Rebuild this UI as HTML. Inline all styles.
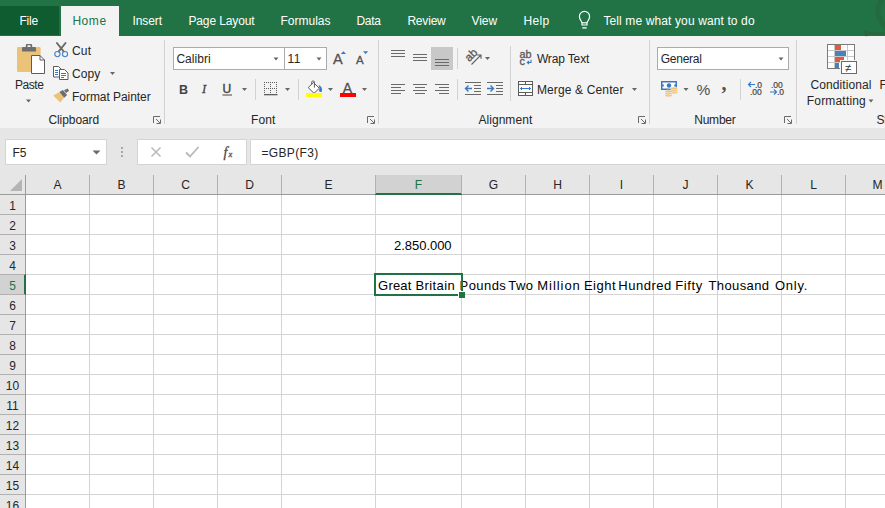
<!DOCTYPE html>
<html>
<head>
<meta charset="utf-8">
<title>Excel</title>
<style>
*{box-sizing:border-box;margin:0;padding:0}
html,body{width:885px;height:508px;overflow:hidden;background:#fff}
body{font-family:"Liberation Sans",sans-serif;font-size:12px;color:#262626;position:relative}
.abs{position:absolute}
#tabs{left:0;top:0;width:885px;height:36px;background:#217346}
#file{left:0;top:6px;width:59px;height:29px;background:#0e5c2f}
#home{left:61px;top:6px;width:58px;height:31px;background:#f3f3f3}
#ribbon{left:0;top:36px;width:885px;height:92px;background:#f3f3f3}
#below{left:0;top:128px;width:885px;height:380px;background:#e6e6e6}
.t{position:absolute;white-space:pre;line-height:15px;font-size:12px;color:#262626}
.sep{position:absolute;width:1px;background:#d2d2d2}
.box{position:absolute;background:#fff;border:1px solid #ababab}
.fbox{position:absolute;background:#fff;border:1px solid #d4d4d4}
.arr{position:absolute;width:0;height:0;border-left:3px solid transparent;border-right:3px solid transparent;border-top:3px solid #606060}
.ch{position:absolute;top:177px;font-size:13px;line-height:15px;text-align:center;transform:scaleX(.93)}
.rh{position:absolute;left:0;width:25px;font-size:13px;line-height:15px;text-align:center;transform:scaleX(.92)}
svg{position:absolute;overflow:visible}
</style>
</head>
<body>
<div id="tabs" class="abs"></div>
<div id="file" class="abs"></div>
<div id="home" class="abs"></div>
<div id="ribbon" class="abs"></div>
<div id="below" class="abs"></div>
<div class="fbox" style="left:5px;top:139px;width:102px;height:26px"></div>
<div class="fbox" style="left:137px;top:139px;width:110px;height:26px"></div>
<div class="fbox" style="left:250px;top:139px;width:640px;height:26px"></div>
<svg width="885" height="175" viewBox="0 0 885 175" style="left:0;top:0" font-family="'Liberation Sans',sans-serif">
<!-- decorative header pattern -->
<g fill="none" stroke="#25693f" stroke-width="3">
<circle cx="897" cy="11" r="19" stroke-width="5"/>
<path d="M866 33.500H885"/>
</g>
<circle cx="866.500" cy="33.500" r="2.800" fill="#25693f"/>
<!-- lightbulb -->
<g fill="none" stroke="#fff" stroke-width="1.2">
<path d="M582 25v-1.8c0-1.8-2.6-3.6-2.6-6.7a5.1 5.1 0 0 1 10.2 0c0 3.100-2.600 4.900-2.600 6.700V25Z"/>
<path d="M582 22.800h5"/>
<path d="M582.300 27.900h4.400" stroke-width="1.300"/>
</g>
<!-- group separators -->
<g fill="#d2d2d2" shape-rendering="crispEdges">
<rect x="164" y="40" width="1" height="84"/>
<rect x="378" y="40" width="1" height="84"/>
<rect x="649" y="40" width="1" height="84"/>
<rect x="796" y="40" width="1" height="84"/>
<rect x="255" y="79" width="1" height="21"/>
<rect x="298" y="79" width="1" height="21"/>
<rect x="457" y="48" width="1" height="21"/>
<rect x="457" y="79" width="1" height="21"/>
<rect x="510" y="46" width="1" height="55"/>
<rect x="740" y="79" width="1" height="21"/>
</g>
<!-- dialog launchers -->
<g fill="none" stroke="#6a6a6a" stroke-width="1"><path d="M153.500 123v-6.500H160"/><path d="M156 119l4 4M160.500 119.500v4h-4"/></g>
<g fill="none" stroke="#6a6a6a" stroke-width="1" transform="translate(214 0)"><path d="M153.500 123v-6.500H160"/><path d="M156 119l4 4M160.500 119.500v4h-4"/></g>
<g fill="none" stroke="#6a6a6a" stroke-width="1" transform="translate(485 0)"><path d="M153.500 123v-6.500H160"/><path d="M156 119l4 4M160.500 119.500v4h-4"/></g>
<g fill="none" stroke="#6a6a6a" stroke-width="1" transform="translate(631 0)"><path d="M153.500 123v-6.500H160"/><path d="M156 119l4 4M160.500 119.500v4h-4"/></g>
<!-- PASTE -->
<rect x="17" y="47" width="23.600" height="25" rx="1.200" fill="#ebc378"/>
<path d="M22 51.500v-3.300q0-1.200 1.200-1.200h2.600v-1.800q0-1.200 1.200-1.200h4q1.200 0 1.200 1.200v1.800h2.600q1.200 0 1.200 1.200v3.300z" fill="#6e6e6e"/>
<rect x="27.500" y="45.300" width="3" height="1.700" fill="#f3f3f3"/>
<path d="M31.500 55.500h8.500l4.500 4.500v13.500h-13z" fill="#fff" stroke="#5c5c5c" stroke-width="1"/>
<path d="M40 55.500v4.500h4.500" fill="none" stroke="#5c5c5c" stroke-width="1"/>
<!-- CUT -->
<g fill="none" stroke-linecap="round">
<path d="M56.900 43l6.700 8.400M65.500 43l-6.700 8.400" stroke="#6a6a6a" stroke-width="1.900"/>
<circle cx="57.400" cy="54.100" r="2.600" stroke="#4482c8" stroke-width="1.100"/>
<circle cx="65" cy="54.100" r="2.600" stroke="#4482c8" stroke-width="1.100"/>
</g>
<!-- COPY -->
<g stroke="#5c5c5c" stroke-width="1" fill="#fff">
<path d="M53.500 66.500h5l3 3v7.500h-8z"/>
<path d="M59.500 69.500h5l3.500 3.500v6.500h-8.500z"/>
</g>
<g stroke="#3b78c3" stroke-width="1" shape-rendering="crispEdges">
<path d="M55 70.500h3M55 72.500h3M55 74.500h3M61 73.500h5M61 75.500h5M61 77.500h3"/>
</g>
<!-- FORMAT PAINTER -->
<path d="M53.300 95.600l5.700-3.400 5.200 5.500-4 4.700z" fill="#ebc378"/>
<path d="M59.300 92l3.600-1.900 4.200 5-2.900 2.600z" fill="#6e6e6e"/>
<path d="M64 90.200l3.600-1.700 1.500 2.200-3 2.300z" fill="#6e6e6e"/>
<!-- FONT boxes -->
<g fill="#fff" stroke="#ababab" stroke-width="1">
<rect x="173.500" y="47.500" width="111" height="22"/>
<rect x="284.500" y="47.500" width="42" height="22"/>
<rect x="657.500" y="47.500" width="131" height="22"/>
</g>
<!-- grow / shrink font -->
<text x="333" y="64" font-size="14.500" fill="#505050" stroke="#505050" stroke-width=".3">A</text>
<path d="M340.800 54l2.600-2.800 2.600 2.800z" fill="#3b78c3"/>
<text x="356" y="64" font-size="11.500" fill="#505050" stroke="#505050" stroke-width=".3">A</text>
<path d="M363 51.300h5.200l-2.600 2.700z" fill="#3b78c3"/>
<!-- B I U -->
<text x="179" y="93.500" font-size="12.500" font-weight="bold" fill="#444">B</text>
<text x="202" y="93" font-size="12.500" font-style="italic" font-family="'Liberation Serif',serif" fill="#444" stroke="#444" stroke-width=".3">I</text>
<text x="222.500" y="93" font-size="12" fill="#444" stroke="#444" stroke-width=".4">U</text>
<rect x="222.500" y="94.500" width="9.500" height="1" fill="#444"/>
<!-- borders icon -->
<g fill="none" stroke="#5c5c5c" stroke-width="1" stroke-dasharray="1 1" shape-rendering="crispEdges">
<path d="M264 82.500h14M264 88.500h14M264.500 82v12M270.500 82v12M276.500 82v12"/>
</g>
<rect x="264" y="94" width="13.500" height="1.300" fill="#5c5c5c"/>
<!-- fill bucket -->
<path d="M313.500 82.500l5.800 5.800-5.300 5-5.800-5.700z" fill="#fff" stroke="#5c5c5c" stroke-width="1"/>
<path d="M311.700 84.300v-2.200q0-1 1-1h.7q1 0 1 1v5.500" fill="none" stroke="#5c5c5c" stroke-width="1"/>
<path d="M318.600 84.800q4.200 2 3.300 7-1.800.5-2.900-.6 1.300-3-.4-6.400z" fill="#3b78c3"/>
<rect x="306" y="93" width="16" height="4" fill="#ffff00"/>
<!-- font color -->
<text x="342.700" y="93" font-size="14" fill="#505050" stroke="#505050" stroke-width=".3">A</text>
<rect x="340" y="93" width="16" height="4" fill="#ff0000"/>
<!-- alignment -->
<rect x="431" y="47" width="22" height="23" fill="#c8c8c8"/>
<g fill="#6a6a6a" shape-rendering="crispEdges">
<rect x="391" y="50" width="14" height="1"/><rect x="391" y="53" width="14" height="1"/><rect x="391" y="56" width="14" height="1"/>
<rect x="413" y="54" width="14" height="1"/><rect x="413" y="57" width="14" height="1"/><rect x="413" y="60" width="14" height="1"/>
<rect x="435" y="59" width="14" height="1"/><rect x="435" y="62" width="14" height="1"/><rect x="435" y="65" width="14" height="1"/>
<rect x="391" y="84" width="14" height="1"/><rect x="391" y="87" width="10" height="1"/><rect x="391" y="90" width="14" height="1"/><rect x="391" y="93" width="10" height="1"/>
<rect x="413" y="84" width="14" height="1"/><rect x="415" y="87" width="10" height="1"/><rect x="413" y="90" width="14" height="1"/><rect x="415" y="93" width="10" height="1"/>
<rect x="435" y="84" width="14" height="1"/><rect x="439" y="87" width="10" height="1"/><rect x="435" y="90" width="14" height="1"/><rect x="439" y="93" width="10" height="1"/>
<!-- indent -->
<rect x="465" y="82" width="16" height="1"/><rect x="474" y="85" width="7" height="1"/><rect x="474" y="88" width="7" height="1"/><rect x="474" y="91" width="7" height="1"/><rect x="465" y="94" width="16" height="1"/>
<rect x="487" y="82" width="16" height="1"/><rect x="496" y="85" width="7" height="1"/><rect x="496" y="88" width="7" height="1"/><rect x="496" y="91" width="7" height="1"/><rect x="487" y="94" width="16" height="1"/>
</g>
<g fill="none" stroke="#3b78c3" stroke-width="1.400">
<path d="M472 88.500h-6M468.500 85.500l-3 3 3 3"/>
<path d="M487 88.500h6M490.500 85.500l3 3-3 3"/>
</g>
<!-- orientation -->
<text transform="translate(469.300 62.300) rotate(-45)" font-size="11.500" fill="#5c5c5c" stroke="#5c5c5c" stroke-width=".35">ab</text>
<g fill="none" stroke="#5c5c5c" stroke-width="1.100"><path d="M471.500 64.500l9.300-9.300M477.300 55h3.700v3.700"/></g>
<!-- wrap text icon -->
<text x="519.500" y="57.700" font-size="10.800" fill="#5c5c5c" stroke="#5c5c5c" stroke-width=".35">ab</text>
<text x="519.500" y="65" font-size="10.800" fill="#5c5c5c" stroke="#5c5c5c" stroke-width=".35">c</text>
<g fill="none" stroke="#3b78c3" stroke-width="1.100"><path d="M531 59.800v2.700h-3.500M529 61l-1.700 1.500 1.700 1.500"/></g>
<!-- merge icon -->
<g fill="#fff" stroke="#5c5c5c" stroke-width="1" shape-rendering="crispEdges">
<rect x="518.500" y="81.500" width="14" height="14"/>
<path d="M518.500 84.500h14M518.500 92.500h14M525.500 81.500v3M525.500 92.500v3"/>
</g>
<g fill="none" stroke="#3b78c3" stroke-width="1"><path d="M520.500 88.500h10M522 87l-1.500 1.500 1.500 1.500M529 87l1.500 1.500-1.500 1.500"/></g>
<!-- currency -->
<rect x="661" y="81" width="16" height="9" fill="#3b78c3"/>
<rect x="662.500" y="82.500" width="13" height="6" fill="#fff"/>
<circle cx="669" cy="85.500" r="2.200" fill="#3b78c3"/>
<rect x="661.800" y="84.500" width="2" height="2" fill="#3b78c3"/><rect x="674.200" y="84.500" width="2" height="2" fill="#3b78c3"/>
<g fill="#ebc378" stroke="#f3f3f3" stroke-width=".6">
<ellipse cx="674" cy="92.500" rx="3.500" ry="1.400"/><ellipse cx="674" cy="90.500" rx="3.500" ry="1.400"/><ellipse cx="674" cy="88.500" rx="3.500" ry="1.400"/>
<ellipse cx="668.500" cy="95.500" rx="3.500" ry="1.400"/><ellipse cx="668.500" cy="93.500" rx="3.500" ry="1.400"/><ellipse cx="668.500" cy="91.500" rx="3.500" ry="1.400"/>
</g>
<text x="696.500" y="95" font-size="15.500" fill="#505050">%</text>
<text x="721.500" y="90" font-size="20" font-weight="bold" font-family="'Liberation Serif',serif" fill="#505050">,</text>
<!-- inc/dec decimal -->
<g font-size="8.500" fill="#444" stroke="#444" stroke-width=".2">
<text x="755" y="87.500">.0</text><text x="750" y="95">.00</text>
<text x="771" y="87.500">.00</text><text x="777" y="95">.0</text>
</g>
<g fill="none" stroke="#3b78c3" stroke-width="1.200">
<path d="M755 84.500h-6.500M751 82l-2.500 2.500 2.500 2.500"/>
<path d="M770 92h6.500M774 89.500l2.500 2.500-2.500 2.500"/>
</g>
<!-- conditional formatting -->
<rect x="827.500" y="44.500" width="27" height="24" fill="#fff" stroke="#7a7a7a" stroke-width="1"/>
<g stroke="#c8c8c8" stroke-width="1" shape-rendering="crispEdges"><path d="M834.500 45v23M847.500 45v23M828 50.500h26M828 56.500h26M828 62.500h26"/></g>
<rect x="835" y="45" width="6" height="5" fill="#dc5c3c"/>
<rect x="835" y="51" width="11" height="5" fill="#4a80bc"/>
<rect x="835" y="57" width="9" height="5" fill="#dc5c3c"/>
<rect x="835" y="63" width="4" height="5" fill="#4a80bc"/>
<rect x="840" y="60" width="18" height="14" fill="#f3f3f3"/>
<rect x="841.500" y="61.500" width="15" height="12" fill="#fff" stroke="#6a6a6a" stroke-width="1"/>
<text x="845" y="72" font-size="11.500" fill="#333">≠</text>
<!-- dropdown arrows -->
<g fill="#666">
<path transform="translate(26 99.500)" d="M0 0h5l-2.500 3z"/>
<path transform="translate(110 72)" d="M0 0h5l-2.500 3z"/>
<path transform="translate(273.500 57.500)" d="M0 0h5l-2.500 3z"/>
<path transform="translate(316.500 57.500)" d="M0 0h5l-2.500 3z"/>
<path transform="translate(242 88)" d="M0 0h5l-2.500 3z"/>
<path transform="translate(285 88)" d="M0 0h5l-2.500 3z"/>
<path transform="translate(328 88)" d="M0 0h5l-2.500 3z"/>
<path transform="translate(362 88)" d="M0 0h5l-2.500 3z"/>
<path transform="translate(485 57)" d="M0 0h5l-2.500 3z"/>
<path transform="translate(632 88)" d="M0 0h5l-2.500 3z"/>
<path transform="translate(778.500 57.500)" d="M0 0h5l-2.500 3z"/>
<path transform="translate(683.500 88)" d="M0 0h5l-2.500 3z"/>
<path transform="translate(868.500 99.500)" d="M0 0h5l-2.500 3z"/>
</g>
<!-- formula bar icons -->
<g fill="#8a8a8a"><circle cx="122" cy="148" r=".9"/><circle cx="122" cy="152" r=".9"/><circle cx="122" cy="156" r=".9"/></g>
<path d="M92.500 150.500h8l-4 4z" fill="#6a6a6a"/>
<g fill="none" stroke="#b9b9b9" stroke-width="1.500">
<path d="M151.500 147.500l9 9M160.500 147.500l-9 9"/>
<path d="M186 152.500l4 4 8.500-9.500" stroke-width="1.800"/>
</g>
<text x="223.500" y="156.500" font-size="14" font-style="italic" font-family="'Liberation Serif',serif" fill="#4a4a4a" stroke="#4a4a4a" stroke-width=".3">f</text>
<text x="228.500" y="157" font-size="8.500" font-style="italic" font-family="'Liberation Serif',serif" fill="#4a4a4a" stroke="#4a4a4a" stroke-width=".3">x</text>
</svg>

<div class="abs" style="left:376px;top:175px;width:86px;height:18px;background:#d2d2d2"></div>
<div class="abs" style="left:375px;top:193px;width:87px;height:2px;background:#217346"></div>
<div class="abs" style="left:0;top:275px;width:24px;height:20px;background:#d2d2d2"></div>
<div class="abs" style="left:24px;top:274px;width:2px;height:21px;background:#217346"></div>
<div class="abs" style="left:26px;top:195px;width:859px;height:313px;background:#fff"></div>
<div class="abs" style="left:0;top:194px;width:375px;height:1px;background:#9b9b9b"></div>
<div class="abs" style="left:462px;top:194px;width:423px;height:1px;background:#9b9b9b"></div>
<div class="abs" style="left:25px;top:175px;width:1px;height:99px;background:#9b9b9b"></div>
<div class="abs" style="left:25px;top:295px;width:1px;height:213px;background:#9b9b9b"></div>
<svg class="abs" style="left:8px;top:178px" width="16" height="16"><path d="M14 1V13H2Z" fill="#b4b4b4"/></svg>
<div class="abs" style="left:89px;top:175px;width:1px;height:19px;background:#b1b1b1"></div>
<div class="abs" style="left:89px;top:195px;width:1px;height:313px;background:#d4d4d4"></div>
<div class="ch" style="left:26px;width:63px;color:#262626">A</div>
<div class="abs" style="left:153px;top:175px;width:1px;height:19px;background:#b1b1b1"></div>
<div class="abs" style="left:153px;top:195px;width:1px;height:313px;background:#d4d4d4"></div>
<div class="ch" style="left:90px;width:63px;color:#262626">B</div>
<div class="abs" style="left:217px;top:175px;width:1px;height:19px;background:#b1b1b1"></div>
<div class="abs" style="left:217px;top:195px;width:1px;height:313px;background:#d4d4d4"></div>
<div class="ch" style="left:154px;width:63px;color:#262626">C</div>
<div class="abs" style="left:281px;top:175px;width:1px;height:19px;background:#b1b1b1"></div>
<div class="abs" style="left:281px;top:195px;width:1px;height:313px;background:#d4d4d4"></div>
<div class="ch" style="left:218px;width:63px;color:#262626">D</div>
<div class="abs" style="left:375px;top:175px;width:1px;height:19px;background:#b1b1b1"></div>
<div class="abs" style="left:375px;top:195px;width:1px;height:313px;background:#d4d4d4"></div>
<div class="ch" style="left:282px;width:93px;color:#262626">E</div>
<div class="abs" style="left:461px;top:175px;width:1px;height:19px;background:#b1b1b1"></div>
<div class="abs" style="left:461px;top:195px;width:1px;height:313px;background:#d4d4d4"></div>
<div class="ch" style="left:376px;width:85px;color:#217346">F</div>
<div class="abs" style="left:525px;top:175px;width:1px;height:19px;background:#b1b1b1"></div>
<div class="abs" style="left:525px;top:195px;width:1px;height:313px;background:#d4d4d4"></div>
<div class="ch" style="left:462px;width:63px;color:#262626">G</div>
<div class="abs" style="left:589px;top:175px;width:1px;height:19px;background:#b1b1b1"></div>
<div class="abs" style="left:589px;top:195px;width:1px;height:313px;background:#d4d4d4"></div>
<div class="ch" style="left:526px;width:63px;color:#262626">H</div>
<div class="abs" style="left:653px;top:175px;width:1px;height:19px;background:#b1b1b1"></div>
<div class="abs" style="left:653px;top:195px;width:1px;height:313px;background:#d4d4d4"></div>
<div class="ch" style="left:590px;width:63px;color:#262626">I</div>
<div class="abs" style="left:717px;top:175px;width:1px;height:19px;background:#b1b1b1"></div>
<div class="abs" style="left:717px;top:195px;width:1px;height:313px;background:#d4d4d4"></div>
<div class="ch" style="left:654px;width:63px;color:#262626">J</div>
<div class="abs" style="left:781px;top:175px;width:1px;height:19px;background:#b1b1b1"></div>
<div class="abs" style="left:781px;top:195px;width:1px;height:313px;background:#d4d4d4"></div>
<div class="ch" style="left:718px;width:63px;color:#262626">K</div>
<div class="abs" style="left:845px;top:175px;width:1px;height:19px;background:#b1b1b1"></div>
<div class="abs" style="left:845px;top:195px;width:1px;height:313px;background:#d4d4d4"></div>
<div class="ch" style="left:782px;width:63px;color:#262626">L</div>
<div class="abs" style="left:909px;top:175px;width:1px;height:19px;background:#b1b1b1"></div>
<div class="abs" style="left:909px;top:195px;width:1px;height:313px;background:#d4d4d4"></div>
<div class="ch" style="left:846px;width:63px;color:#262626">M</div>
<div class="abs" style="left:0;top:214px;width:25px;height:1px;background:#b1b1b1"></div>
<div class="abs" style="left:26px;top:214px;width:859px;height:1px;background:#d4d4d4"></div>
<div class="rh" style="top:198px;color:#262626">1</div>
<div class="abs" style="left:0;top:234px;width:25px;height:1px;background:#b1b1b1"></div>
<div class="abs" style="left:26px;top:234px;width:859px;height:1px;background:#d4d4d4"></div>
<div class="rh" style="top:218px;color:#262626">2</div>
<div class="abs" style="left:0;top:254px;width:25px;height:1px;background:#b1b1b1"></div>
<div class="abs" style="left:26px;top:254px;width:859px;height:1px;background:#d4d4d4"></div>
<div class="rh" style="top:238px;color:#262626">3</div>
<div class="abs" style="left:0;top:274px;width:25px;height:1px;background:#b1b1b1"></div>
<div class="abs" style="left:26px;top:274px;width:859px;height:1px;background:#d4d4d4"></div>
<div class="rh" style="top:258px;color:#262626">4</div>
<div class="abs" style="left:0;top:294px;width:25px;height:1px;background:#b1b1b1"></div>
<div class="abs" style="left:26px;top:294px;width:859px;height:1px;background:#d4d4d4"></div>
<div class="rh" style="top:278px;color:#217346">5</div>
<div class="abs" style="left:0;top:314px;width:25px;height:1px;background:#b1b1b1"></div>
<div class="abs" style="left:26px;top:314px;width:859px;height:1px;background:#d4d4d4"></div>
<div class="rh" style="top:298px;color:#262626">6</div>
<div class="abs" style="left:0;top:334px;width:25px;height:1px;background:#b1b1b1"></div>
<div class="abs" style="left:26px;top:334px;width:859px;height:1px;background:#d4d4d4"></div>
<div class="rh" style="top:318px;color:#262626">7</div>
<div class="abs" style="left:0;top:354px;width:25px;height:1px;background:#b1b1b1"></div>
<div class="abs" style="left:26px;top:354px;width:859px;height:1px;background:#d4d4d4"></div>
<div class="rh" style="top:338px;color:#262626">8</div>
<div class="abs" style="left:0;top:374px;width:25px;height:1px;background:#b1b1b1"></div>
<div class="abs" style="left:26px;top:374px;width:859px;height:1px;background:#d4d4d4"></div>
<div class="rh" style="top:358px;color:#262626">9</div>
<div class="abs" style="left:0;top:394px;width:25px;height:1px;background:#b1b1b1"></div>
<div class="abs" style="left:26px;top:394px;width:859px;height:1px;background:#d4d4d4"></div>
<div class="rh" style="top:378px;color:#262626">10</div>
<div class="abs" style="left:0;top:414px;width:25px;height:1px;background:#b1b1b1"></div>
<div class="abs" style="left:26px;top:414px;width:859px;height:1px;background:#d4d4d4"></div>
<div class="rh" style="top:398px;color:#262626">11</div>
<div class="abs" style="left:0;top:434px;width:25px;height:1px;background:#b1b1b1"></div>
<div class="abs" style="left:26px;top:434px;width:859px;height:1px;background:#d4d4d4"></div>
<div class="rh" style="top:418px;color:#262626">12</div>
<div class="abs" style="left:0;top:454px;width:25px;height:1px;background:#b1b1b1"></div>
<div class="abs" style="left:26px;top:454px;width:859px;height:1px;background:#d4d4d4"></div>
<div class="rh" style="top:438px;color:#262626">13</div>
<div class="abs" style="left:0;top:474px;width:25px;height:1px;background:#b1b1b1"></div>
<div class="abs" style="left:26px;top:474px;width:859px;height:1px;background:#d4d4d4"></div>
<div class="rh" style="top:458px;color:#262626">14</div>
<div class="abs" style="left:0;top:494px;width:25px;height:1px;background:#b1b1b1"></div>
<div class="abs" style="left:26px;top:494px;width:859px;height:1px;background:#d4d4d4"></div>
<div class="rh" style="top:478px;color:#262626">15</div>
<div class="abs" style="left:0;top:514px;width:25px;height:1px;background:#b1b1b1"></div>
<div class="abs" style="left:26px;top:514px;width:859px;height:1px;background:#d4d4d4"></div>
<div class="rh" style="top:498px;color:#262626">16</div>

<div class="t" style="left:19.4px;top:14.3px;color:#fff;font-size:12px;letter-spacing:-0.16px;">File</div>
<div class="t" style="left:72.4px;top:14.3px;color:#217346;font-size:12px;letter-spacing:0.55px;">Home</div>
<div class="t" style="left:132.4px;top:14.3px;color:#fff;font-size:12px;letter-spacing:-0.05px;">Insert</div>
<div class="t" style="left:188.4px;top:14.3px;color:#fff;font-size:12px;letter-spacing:-0.11px;">Page Layout</div>
<div class="t" style="left:280.4px;top:14.3px;color:#fff;font-size:12px;letter-spacing:0.02px;">Formulas</div>
<div class="t" style="left:356.4px;top:14.3px;color:#fff;font-size:12px;letter-spacing:-0.29px;">Data</div>
<div class="t" style="left:407.4px;top:14.3px;color:#fff;font-size:12px;letter-spacing:-0.19px;">Review</div>
<div class="t" style="left:471.4px;top:14.3px;color:#fff;font-size:12px;letter-spacing:-0.02px;">View</div>
<div class="t" style="left:523.4px;top:14.3px;color:#fff;font-size:12px;letter-spacing:0.38px;">Help</div>
<div class="t" style="left:603.4px;top:14.3px;color:#fff;font-size:12px;letter-spacing:0.12px;">Tell me what you want to do</div>
<div class="t" style="left:14.9px;top:78.3px;color:#262626;font-size:12px;letter-spacing:-0.40px;">Paste</div>
<div class="t" style="left:72.1px;top:43.8px;color:#262626;font-size:12px;letter-spacing:0.10px;">Cut</div>
<div class="t" style="left:72.1px;top:67.3px;color:#262626;font-size:12px;letter-spacing:0.05px;">Copy</div>
<div class="t" style="left:72.1px;top:89.8px;color:#262626;font-size:12px;letter-spacing:-0.06px;">Format Painter</div>
<div class="t" style="left:48.4px;top:113.3px;color:#262626;font-size:12px;letter-spacing:-0.07px;">Clipboard</div>
<div class="t" style="left:176.4px;top:52.3px;color:#262626;font-size:12px;letter-spacing:0.03px;">Calibri</div>
<div class="t" style="left:287.4px;top:52.3px;color:#262626;font-size:12px;letter-spacing:0.62px;">11</div>
<div class="t" style="left:250.9px;top:113.3px;color:#262626;font-size:12px;letter-spacing:0.17px;">Font</div>
<div class="t" style="left:536.9px;top:52.3px;color:#262626;font-size:12px;letter-spacing:-0.14px;">Wrap Text</div>
<div class="t" style="left:536.9px;top:82.8px;color:#262626;font-size:12px;letter-spacing:0.14px;">Merge &amp; Center</div>
<div class="t" style="left:478.4px;top:113.3px;color:#262626;font-size:12px;letter-spacing:0.06px;">Alignment</div>
<div class="t" style="left:660.8px;top:52.3px;color:#262626;font-size:12px;letter-spacing:-0.27px;">General</div>
<div class="t" style="left:694.2px;top:113.3px;color:#262626;font-size:12px;letter-spacing:-0.21px;">Number</div>
<div class="t" style="left:810.4px;top:78.3px;color:#262626;font-size:12px;letter-spacing:0.10px;">Conditional</div>
<div class="t" style="left:806.8px;top:94.3px;color:#262626;font-size:12px;letter-spacing:0.18px;">Formatting</div>
<div class="t" style="left:879.4px;top:78.3px;color:#262626;font-size:12px;letter-spacing:-0.14px;">F</div>
<div class="t" style="left:876.4px;top:113.3px;color:#262626;font-size:12px;letter-spacing:-0.07px;">St</div>
<div class="t" style="left:12.4px;top:146.3px;color:#262626;font-size:12px;letter-spacing:0.09px;">F5</div>
<div class="t" style="left:261.4px;top:146.3px;color:#262626;font-size:12px;letter-spacing:0.36px;">=GBP(F3)</div>
<div class="t" style="left:394.0px;top:238.0px;color:#000;font-size:13px;letter-spacing:-0.03px;">2.850.000</div>
<div class="t" style="left:378.1px;top:278.0px;color:#000;font-size:13px;letter-spacing:0.20px;">Great</div>
<div class="t" style="left:415.4px;top:278.0px;color:#000;font-size:13px;letter-spacing:0.42px;">Britain</div>
<div class="t" style="left:459.6px;top:278.0px;color:#000;font-size:13px;letter-spacing:0.42px;">Pounds</div>
<div class="t" style="left:508.2px;top:278.0px;color:#000;font-size:13px;letter-spacing:0.52px;">Two</div>
<div class="t" style="left:537.3px;top:278.0px;color:#000;font-size:13px;letter-spacing:0.95px;">Million</div>
<div class="t" style="left:583.9px;top:278.0px;color:#000;font-size:13px;letter-spacing:0.55px;">Eight</div>
<div class="t" style="left:618.3px;top:278.0px;color:#000;font-size:13px;letter-spacing:0.52px;">Hundred</div>
<div class="t" style="left:675.2px;top:278.0px;color:#000;font-size:13px;letter-spacing:0.65px;">Fifty</div>
<div class="t" style="left:708.5px;top:278.0px;color:#000;font-size:13px;letter-spacing:0.38px;">Thousand</div>
<div class="t" style="left:775.0px;top:278.0px;color:#000;font-size:13px;letter-spacing:0.74px;">Only.</div>
<div class="abs" style="left:374px;top:273px;width:89px;height:23px;border:2px solid #217346"></div>
<div class="abs" style="left:458px;top:291px;width:7px;height:7px;background:#217346;border-left:1px solid #fff;border-top:1px solid #fff"></div>
</body>
</html>
